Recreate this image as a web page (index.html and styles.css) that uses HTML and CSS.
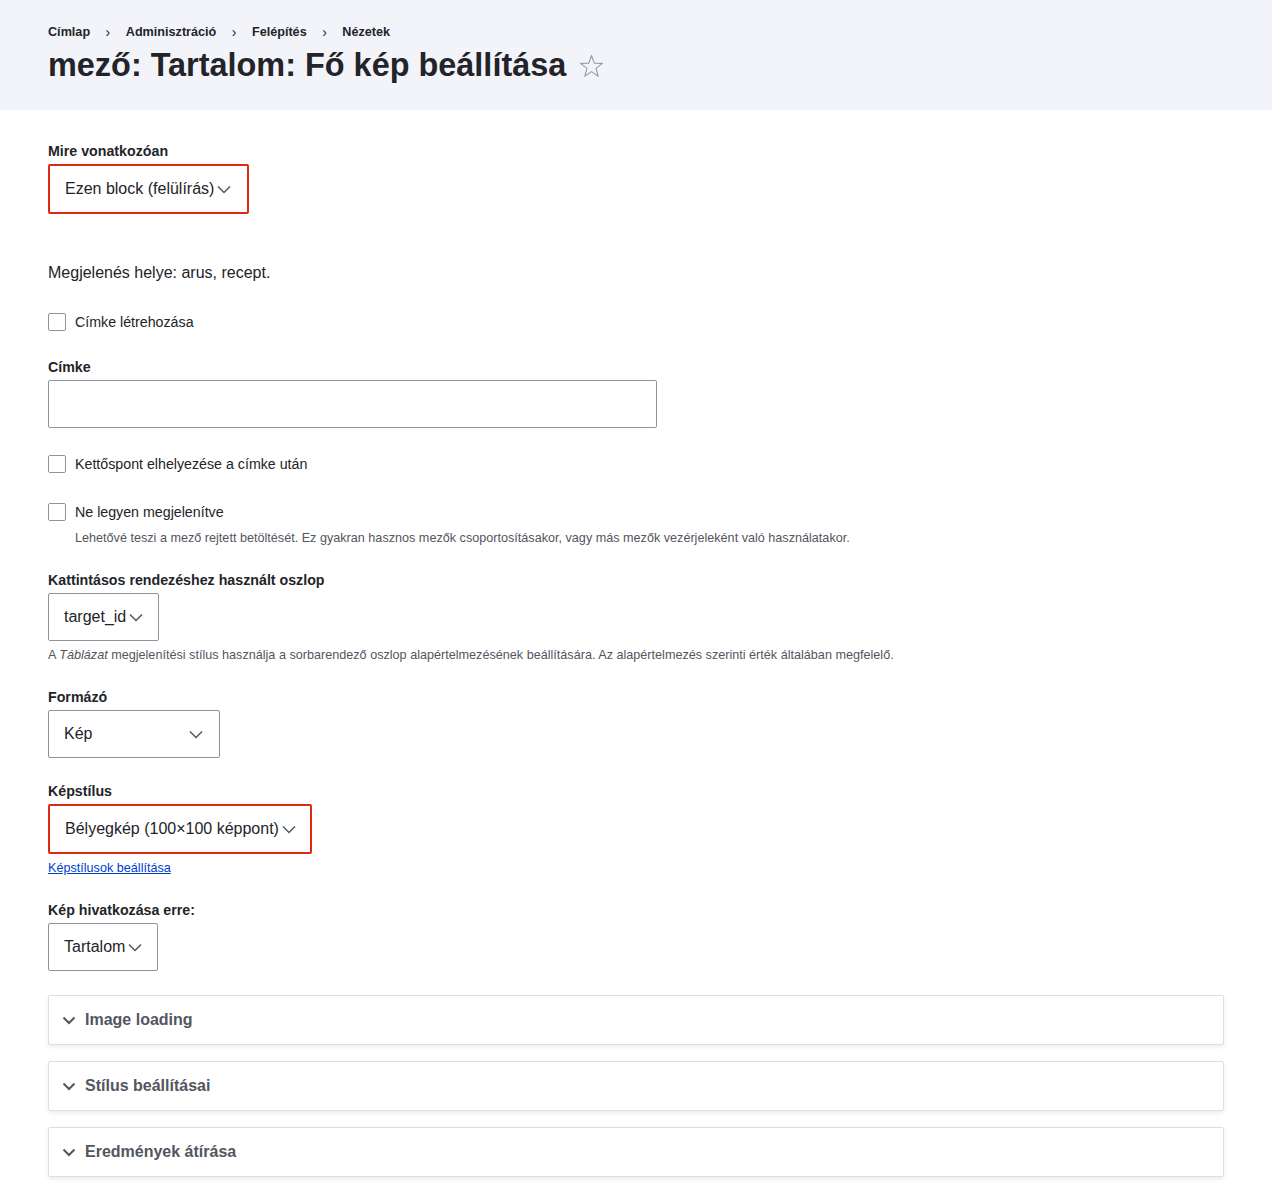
FILE: index.html
```html
<!DOCTYPE html>
<html lang="hu">
<head>
<meta charset="utf-8">
<title>mező: Tartalom: Fő kép beállítása</title>
<link rel="stylesheet" href="styles.css">
</head>
<body>
<header class="page-header">
  <nav class="breadcrumb">
    <a href="#">Címlap</a><span class="sep">›</span>
    <a href="#">Adminisztráció</a><span class="sep">›</span>
    <a href="#">Felépítés</a><span class="sep">›</span>
    <a href="#">Nézetek</a>
  </nav>
  <h1 class="title">mező: Tartalom: Fő kép beállítása
    <svg class="star" width="25" height="24" viewBox="0 0 25 24"><polygon points="12.5,1.5 15.3,9.2 23.5,9.4 17,14.4 19.3,22.3 12.5,17.6 5.7,22.3 8,14.4 1.5,9.4 9.7,9.2" fill="none" stroke="#9a9ca3" stroke-width="1.1" stroke-linejoin="round"/></svg>
  </h1>
</header>

<main class="content">
  <div class="form-item fi-first">
    <label class="label">Mire vonatkozóan</label>
    <div class="select error roomy">Ezen block (felülírás)<svg class="chev" width="14" height="9" viewBox="0 0 14 9"><path d="M1 1.5l6 6 6-6" fill="none" stroke="#545560" stroke-width="1.5"/></svg></div>
  </div>

  <p class="note">Megjelenés helye: arus, recept.</p>

  <div class="checkbox-item ci-1">
    <span class="box"></span><span class="cb-label">Címke létrehozása</span>
  </div>

  <div class="form-item fi-cimke">
    <label class="label">Címke</label>
    <div class="text-input"></div>
  </div>

  <div class="checkbox-item ci-2">
    <span class="box"></span><span class="cb-label">Kettőspont elhelyezése a címke után</span>
  </div>

  <div class="checkbox-item ci-3">
    <span class="box"></span><span class="cb-label">Ne legyen megjelenítve</span>
  </div>
  <div class="description indent">Lehetővé teszi a mező rejtett betöltését. Ez gyakran hasznos mezők csoportosításakor, vagy más mezők vezérjeleként való használatakor.</div>

  <div class="form-item fi-std">
    <label class="label">Kattintásos rendezéshez használt oszlop</label>
    <div class="select">target_id<svg class="chev" width="14" height="9" viewBox="0 0 14 9"><path d="M1 1.5l6 6 6-6" fill="none" stroke="#545560" stroke-width="1.5"/></svg></div>
    <div class="description">A <em>Táblázat</em> megjelenítési stílus használja a sorbarendező oszlop alapértelmezésének beállítására. Az alapértelmezés szerinti érték általában megfelelő.</div>
  </div>

  <div class="form-item fi-std">
    <label class="label">Formázó</label>
    <div class="select wide">Kép<svg class="chev" width="14" height="9" viewBox="0 0 14 9"><path d="M1 1.5l6 6 6-6" fill="none" stroke="#545560" stroke-width="1.5"/></svg></div>
  </div>

  <div class="form-item fi-tight">
    <label class="label">Képstílus</label>
    <div class="select error">Bélyegkép (100×100 képpont)<svg class="chev" width="14" height="9" viewBox="0 0 14 9"><path d="M1 1.5l6 6 6-6" fill="none" stroke="#545560" stroke-width="1.5"/></svg></div>
    <div class="description"><a href="#" class="link">Képstílusok beállítása</a></div>
  </div>

  <div class="form-item fi-std">
    <label class="label">Kép hivatkozása erre:</label>
    <div class="select">Tartalom<svg class="chev" width="14" height="9" viewBox="0 0 14 9"><path d="M1 1.5l6 6 6-6" fill="none" stroke="#545560" stroke-width="1.5"/></svg></div>
  </div>

  <div class="details-list">
    <div class="details"><svg class="dchev" width="14" height="9" viewBox="0 0 14 9"><path d="M1.5 1.5l5.5 5.5 5.5-5.5" fill="none" stroke="#545560" stroke-width="2"/></svg><span>Image loading</span></div>
    <div class="details"><svg class="dchev" width="14" height="9" viewBox="0 0 14 9"><path d="M1.5 1.5l5.5 5.5 5.5-5.5" fill="none" stroke="#545560" stroke-width="2"/></svg><span>Stílus beállításai</span></div>
    <div class="details"><svg class="dchev" width="14" height="9" viewBox="0 0 14 9"><path d="M1.5 1.5l5.5 5.5 5.5-5.5" fill="none" stroke="#545560" stroke-width="2"/></svg><span>Eredmények átírása</span></div>
  </div>
</main>
</body>
</html>
```

FILE: styles.css
```css
* { box-sizing: border-box; }
html, body { margin: 0; padding: 0; }
body {
  font-family: "Liberation Sans", Arial, sans-serif;
  color: #232429;
  background: #fff;
}

.page-header {
  background: #f3f4f9;
  height: 110px;
  padding: 24px 48px 0;
}
.breadcrumb {
  font-size: 12.64px;
  line-height: 16px;
  font-weight: bold;
  display: flex;
  align-items: center;
}
.breadcrumb a { color: #232429; text-decoration: none; }
.breadcrumb .sep { padding: 0 15.5px; font-weight: normal; font-size: 14px; }
.title {
  margin: 5px 0 0;
  font-size: 32.43px;
  line-height: 40px;
  font-weight: bold;
  letter-spacing: 0;
  display: flex;
  align-items: center;
}
.star { margin-left: 13px; margin-top: 2px; }

.content { padding: 32px 48px 0; }

.label {
  display: block;
  font-size: 14.22px;
  line-height: 18px;
  font-weight: bold;
  margin-bottom: 4px;
}
.form-item { margin: 0; }
.fi-first { margin-top: 0; }
.fi-cimke { margin-top: 27px; }
.fi-std { margin-top: 25px; }
.fi-tight { margin-top: 24px; }

.select {
  display: inline-flex;
  align-items: center;
  height: 48px;
  border: 1px solid #919297;
  border-radius: 2px;
  padding: 0 15px 0 15px;
  font-size: 16px;
  gap: 3px;
  color: #232429;
}
.select .chev { margin-top: 1px; }
.select.error { border: 2px solid #dc2b10; height: 50px; padding-left: 15px; padding-right: 14px; }
.select.error.roomy { padding-right: 16px; }
.select.wide { width: 172px; justify-content: space-between; padding-right: 16px; }

.note { margin: 47px 0 0; font-size: 16px; line-height: 24px; }

.checkbox-item { display: flex; align-items: center; height: 18px; }
.ci-1 { margin-top: 28px; }
.ci-2 { margin-top: 27px; }
.ci-3 { margin-top: 30px; }
.box {
  width: 18px; height: 18px;
  border: 1px solid #919297;
  border-radius: 2px;
  background: #fff;
  flex: none;
}
.cb-label { margin-left: 9px; font-size: 14.22px; line-height: 18px; }

.text-input {
  width: 609px;
  height: 48px;
  border: 1px solid #919297;
  border-radius: 2px;
}

.description {
  font-size: 12.64px;
  line-height: 16px;
  color: #545560;
  margin-top: 6px;
}
.description.indent { margin-left: 27px; margin-top: 9px; }
.link { color: #003ecc; text-decoration: underline; }

.details-list { margin-top: 24px; display: flex; flex-direction: column; gap: 16px; padding-bottom: 16px; }
.details {
  height: 50px;
  border: 1px solid #dedfe4;
  border-radius: 2px;
  box-shadow: 0 2px 4px rgba(0,0,0,0.08);
  display: flex;
  align-items: center;
  padding-left: 13px;
  font-size: 16px;
  font-weight: bold;
  color: #545560;
}
.dchev { margin-right: 9px; }
```
